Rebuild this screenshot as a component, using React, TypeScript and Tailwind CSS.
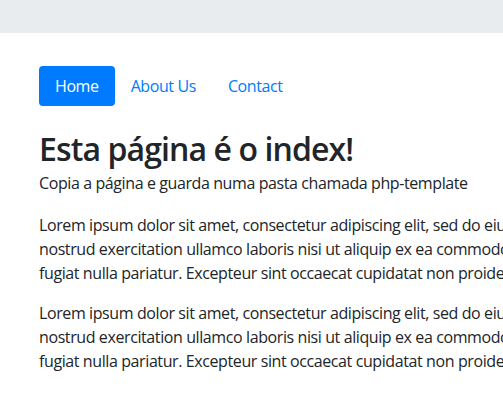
export default function App() {
  const font = { fontFamily: '"Open Sans", "Noto Sans", sans-serif' };
  const lines = [
    'Lorem ipsum dolor sit amet, consectetur adipiscing elit, sed do eiusmod tempor incididunt ut labore et dolore magna aliqua. Ut enim ad minim veniam, quis',
    'nostrud exercitation ullamco laboris nisi ut aliquip ex ea commodo consequat. Duis aute irure dolor in reprehenderit in voluptate velit esse cillum dolore eu',
    'fugiat nulla pariatur. Excepteur sint occaecat cupidatat non proident, sunt in culpa qui officia deserunt mollit anim id est laborum.',
  ];

  return (
    <div
      className="h-[415px] w-full overflow-hidden bg-white text-[16px] tracking-[-0.4px] text-[#212529]"
      style={font}
    >
      <div className="h-[33px] bg-[#e9ecef]" />

      <div className="pl-[39px] pt-[33px]">
        <nav className="flex">
          <a className="rounded bg-[#007bff] px-4 py-2 leading-6 text-white">Home</a>
          <a className="px-4 py-2 leading-6 text-[#007bff]">About Us</a>
          <a className="px-4 py-2 leading-6 text-[#007bff]">Contact</a>
        </nav>

        <h2 className="mt-6 mb-[3px] text-[32px] leading-[1.2] font-semibold tracking-[-0.9px]">
          Esta página é o index!
        </h2>
        <p className="mb-[18px] leading-6">
          Copia a página e guarda numa pasta chamada php-template
        </p>

        {[0, 1].map((i) => (
          <p key={i} className="mb-4 leading-6 whitespace-nowrap">
            {lines.map((l) => (
              <span key={l} className="block">
                {l}
              </span>
            ))}
          </p>
        ))}
      </div>
    </div>
  );
}
